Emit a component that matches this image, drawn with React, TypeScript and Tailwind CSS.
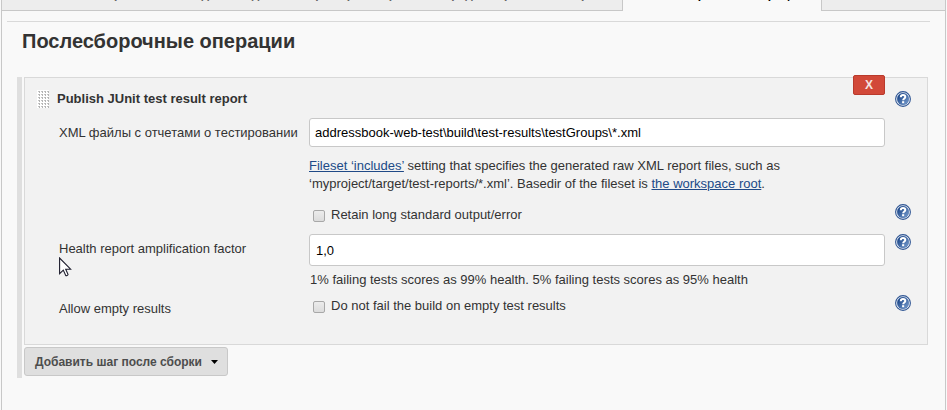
import { useState } from "react";
import type { ReactNode } from "react";

const inactiveTabs = [
  "General",
  "Управление исходным кодом",
  "Триггеры сборки",
  "Среда сборки",
  "Сборка",
];

function Tabs() {
  return (
    <nav className="flex h-[11px] items-end overflow-hidden bg-[#ededed] text-[12px] font-bold">
      <div className="flex h-8 shrink-0 border-b border-[#c8c8c8] pr-1 pl-1">
        {inactiveTabs.map((tab) => (
          <button key={tab} type="button" className="mr-px h-full px-4 pb-px text-[#666]">
            {tab}
          </button>
        ))}
      </div>
      <button
        type="button"
        className="h-8 shrink-0 border-x border-[#c8c8c8] bg-[#f9f9f9] px-[17px] pb-0.5 text-black"
      >
        Послесборочные операции
      </button>
      <div className="h-8 flex-1 border-b border-[#c8c8c8]" />
    </nav>
  );
}

function HelpButton() {
  return (
    <button type="button" aria-label="Help" className="block size-4 shrink-0">
      <svg viewBox="0 0 16 16" className="size-4">
        <defs>
          <linearGradient id="helpFill" x1="0" y1="0" x2="1" y2="1">
            <stop offset="0.2" stopColor="#1f4a8c" />
            <stop offset="1" stopColor="#7fa3d3" />
          </linearGradient>
        </defs>
        <circle cx="8" cy="8" r="7.4" fill="#fff" stroke="#2f5593" strokeWidth="1.1" />
        <circle cx="8" cy="8" r="5.9" fill="url(#helpFill)" stroke="#34609f" strokeWidth="0.4" />
        <path
          d="M5.8 6.2C5.8 4.8 6.8 4 8 4s2.300.7 2.300 1.900c0 1.600-2.100 1.500-2.100 3.300"
          fill="none"
          stroke="#fff"
          strokeWidth="2"
        />
        <rect x="7.1" y="10.2" width="2.1" height="2" fill="#fff" />
      </svg>
    </button>
  );
}

function DragHandle() {
  return (
    <svg viewBox="0 0 12 18" className="h-[18px] w-3 shrink-0 cursor-move">
      <defs>
        <pattern id="dots" width="3" height="3" patternUnits="userSpaceOnUse">
          <rect width="3" height="3" fill="#fff" />
          <rect x="1" y="1" width="2" height="1" fill="#c4c4c4" />
          <rect x="2" y="1" width="1" height="2" fill="#b4b4b4" />
        </pattern>
      </defs>
      <rect width="12" height="18" fill="url(#dots)" />
    </svg>
  );
}

function Row({ label, help = true, children }: { label?: ReactNode; help?: boolean; children: ReactNode }) {
  return (
    <div className="flex items-start">
      <div className="w-[250px] shrink-0">{label}</div>
      <div className="min-w-0 flex-1">{children}</div>
      <div className="ml-[10px] w-4 shrink-0">{help && <HelpButton />}</div>
    </div>
  );
}

function Check({ id, children }: { id: string; children: ReactNode }) {
  return (
    <div className="flex items-start pl-1">
      <input
        id={id}
        type="checkbox"
        className="mt-1.5 size-3 shrink-0 appearance-none rounded-[2px] border border-[#a8a8a8] bg-linear-to-b from-[#ececec] to-[#dcdcdc] checked:bg-[#4b758b]"
      />
      <label htmlFor={id} className="ml-1.5 pt-0.5">
        {children}
      </label>
    </div>
  );
}

function Cursor() {
  return (
    <svg viewBox="0 0 13 20" className="pointer-events-none absolute top-[257px] left-[59px] h-5 w-[13px]">
      <path
        d="M.6 1v15.6l3.7-3.5 2.4 5.3c.5.7 2.5 0 2.3-1L6.700 12.200h4.900z"
        fill="#fff"
        stroke="#1c1c2c"
        strokeWidth="1.1"
      />
    </svg>
  );
}

const field = "block w-full rounded-[3px] border border-[#c8c8c8] bg-white text-black outline-none";
const link = "text-[#204a87] underline";

export default function App() {
  const [files, setFiles] = useState("addressbook-web-test\\build\\test-results\\testGroups\\*.xml");
  const [factor, setFactor] = useState("1,0");

  return (
    <div className="relative bg-[#f9f9f9] px-px font-['Liberation_Sans',Arial,sans-serif] text-[13px] leading-[18px] text-[#333]">
      <main className="min-h-screen border-x border-[#c8c8c8]">
        <Tabs />
        <div className="mt-[10px] mr-[15px] ml-[5px] border-t border-[#d9d9d9]">
          <h1 className="pt-[7px] pl-[15px] text-[20px] leading-6 font-bold">Послесборочные операции</h1>
          <div className="mt-6 mr-[2px] ml-[10px] border-l-[5px] border-[#dfdfdf] pb-[2px] pl-[2px]">
            <section className="border border-[#d9d9d9] bg-[#f2f2f2] pr-4 pb-[26px] pl-3">
              <div className="flex items-start">
                <div className="flex flex-1 items-center pt-3">
                  <DragHandle />
                  <h2 className="ml-2 font-bold">Publish JUnit test result report</h2>
                </div>
                <button
                  type="button"
                  className="-mt-[3px] h-5 w-8 rounded-[2px] border border-[#b93a2c] bg-[#d24939] text-[12px] leading-[18px] font-bold text-[#f5e3e0]"
                >
                  X
                </button>
                <div className="ml-[10px] pt-[13px]">
                  <HelpButton />
                </div>
              </div>

              <div className="pt-[10px] pl-[22px]">
                <Row
                  help={false}
                  label={
                    <label htmlFor="files" className="block pt-1.5 whitespace-nowrap">
                      XML файлы с отчетами о тестировании
                    </label>
                  }
                >
                  <input
                    id="files"
                    type="text"
                    value={files}
                    onChange={(e) => setFiles(e.target.value)}
                    className={`${field} h-[29px] px-[5px]`}
                  />
                  <p className="max-w-[500px] pt-[10px]">
                    <a href="#includes" className={link}>
                      Fileset ‘includes’
                    </a>{" "}
                    setting that specifies the generated raw XML report files, such as
                    ‘myproject/target/test-reports/*.xml’. Basedir of the fileset is{" "}
                    <a href="#workspace" className={link}>
                      the workspace root
                    </a>
                    .
                  </p>
                </Row>
                <div className="pt-[11px]">
                  <Row>
                    <Check id="retain">Retain long standard output/error</Check>
                  </Row>
                </div>
                <div className="pt-[10px]">
                  <Row
                    label={
                      <label htmlFor="factor" className="block pt-1.5">
                        Health report amplification factor
                      </label>
                    }
                  >
                    <input
                      id="factor"
                      type="text"
                      value={factor}
                      onChange={(e) => setFactor(e.target.value)}
                      className={`${field} h-8 px-1.5`}
                    />
                    <p className="pt-[5px] pl-px">
                      1% failing tests scores as 99% health. 5% failing tests scores as 95% health
                    </p>
                  </Row>
                </div>
                <div className="pt-1.5">
                  <Row label={<span className="block pt-[5px]">Allow empty results</span>}>
                    <Check id="empty">Do not fail the build on empty test results</Check>
                  </Row>
                </div>
              </div>
            </section>
            <button
              type="button"
              className="mt-[2px] flex h-[29px] items-center rounded-[3px] border border-[#c8c8c8] bg-[#dfdfdf] pr-[9px] pl-[10px] text-[12px] font-bold text-[#4d4d4d]"
            >
              Добавить шаг после сборки
              <svg viewBox="0 0 7 4" className="mt-px ml-[9px] h-1 w-[7px]">
                <path d="M0 0h7L3.500 4z" fill="#000" />
              </svg>
            </button>
          </div>
        </div>
      </main>
      <Cursor />
    </div>
  );
}
